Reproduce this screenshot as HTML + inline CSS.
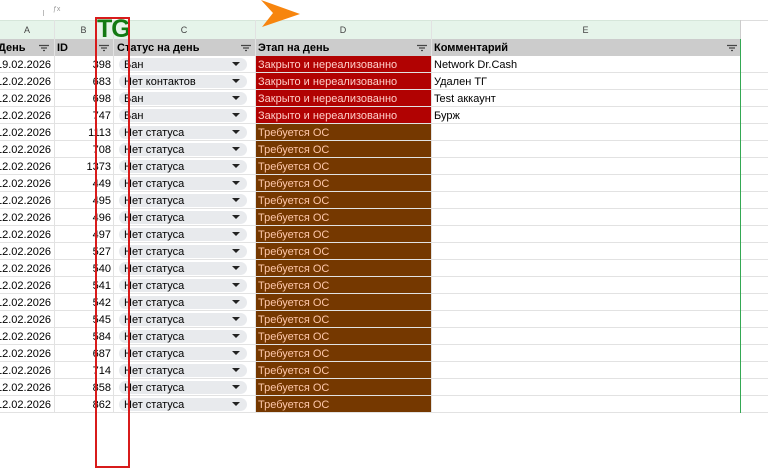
<!DOCTYPE html>
<html><head><meta charset="utf-8"><style>
*{margin:0;padding:0;box-sizing:border-box}
body{width:768px;height:469px;overflow:hidden;background:#fff;font-family:"Liberation Sans",Arial,sans-serif;font-size:11px;color:#000;position:relative}
.abs{position:absolute}
.c{position:absolute;height:17px;line-height:18px;white-space:nowrap;overflow:hidden}
.hl{position:absolute;left:0;width:768px;height:1px;background:#e2e2e2}
.vl{position:absolute;width:1px;background:#e2e2e2}
.pill{position:absolute;height:13px;top:2px;left:6px;width:128px;background:#e8eaed;border-radius:7px;padding-left:5px;line-height:15px}
.pill:after{content:"";position:absolute;right:7px;top:4px;border-left:4px solid transparent;border-right:4px solid transparent;border-top:4px solid #222}
</style></head><body>
<div class="abs" style="left:43px;top:10px;width:1px;height:6px;background:#bbb"></div>
<div class="abs" style="left:53px;top:6px;font-size:7px;color:#999">ƒx</div>
<div class="abs" style="left:0;top:20px;width:740px;height:19px;background:#e6f4ea;border-top:1px solid #d6e6da"></div>
<div class="abs" style="left:740px;top:20px;width:28px;height:19px;background:#fff;border-top:1px solid #ddd"></div>
<div class="abs" style="left:0;top:39px;width:740px;height:17px;background:#cccccc"></div>
<div class="abs" style="top:22px;left:0;width:54px;text-align:center;font-size:9px;color:#444;line-height:16px">A</div>
<div class="abs" style="top:22px;left:54px;width:59px;text-align:center;font-size:9px;color:#444;line-height:16px">B</div>
<div class="abs" style="top:22px;left:113px;width:142px;text-align:center;font-size:9px;color:#444;line-height:16px">C</div>
<div class="abs" style="top:22px;left:255px;width:176px;text-align:center;font-size:9px;color:#444;line-height:16px">D</div>
<div class="abs" style="top:22px;left:431px;width:309px;text-align:center;font-size:9px;color:#444;line-height:16px">E</div>
<div class="c" style="top:39px;left:-2px;font-weight:bold">День</div>
<div class="c" style="top:39px;left:57px;font-weight:bold">ID</div>
<div class="c" style="top:39px;left:117px;font-weight:bold">Статус на день</div>
<div class="c" style="top:39px;left:258px;font-weight:bold">Этап на день</div>
<div class="c" style="top:39px;left:434px;font-weight:bold">Комментарий</div>
<svg class="abs" style="left:0;top:39px" width="768" height="17">
<g stroke="#444" stroke-width="1.2">
<path d="M39 6.5h10M41 9h6M43 11.5h2"/><path d="M99 6.5h10M101 9h6M103 11.5h2"/><path d="M241 6.5h10M243 9h6M245 11.5h2"/><path d="M417 6.5h10M419 9h6M421 11.5h2"/><path d="M727 6.5h10M729 9h6M731 11.5h2"/>
</g></svg>
<div id="rows"></div>
<script>
var ids=[398,683,698,747,1113,708,1373,449,495,496,497,527,540,541,542,545,584,687,714,858,862];
var st=["Бан","Нет контактов","Бан","Бан"];
var cm=["Network Dr.Cash","Удален ТГ","Test аккаунт","Бурж"];
var h="";
for(var i=0;i<21;i++){
 var y=56+i*17;
 h+='<div class="hl" style="top:'+(y+16)+'px"></div>';
 h+='<div class="c" style="top:'+y+'px;left:-4px">'+(i==0?'19.02.2026':'12.02.2026')+'</div>';
 h+='<div class="c" style="top:'+y+'px;left:54px;width:57px;text-align:right">'+ids[i]+'</div>';
 h+='<div class="c" style="top:'+y+'px;left:113px;width:142px;overflow:visible"><div class="pill">'+(i<4?st[i]:'Нет статуса')+'</div></div>';
 var bg=i<4?'#b10202':'#753800', col=i<4?'#ffcfc9':'#ffc8aa';
 h+='<div class="c" style="top:'+y+'px;left:255px;width:176px;height:16px;background:'+bg+';color:'+col+';padding-left:3px">'+(i<4?'Закрыто и нереализованно':'Требуется ОС')+'</div>';
 if(i<4)h+='<div class="c" style="top:'+y+'px;left:434px">'+cm[i]+'</div>';
}
document.getElementById('rows').innerHTML=h;
</script>
<div class="vl" style="left:54px;top:20px;height:393px"></div>
<div class="vl" style="left:113px;top:20px;height:393px"></div>
<div class="vl" style="left:255px;top:20px;height:393px"></div>
<div class="vl" style="left:431px;top:20px;height:393px"></div>
<div class="abs" style="left:740px;top:39px;width:1px;height:374px;background:#34a853"></div>
<div class="abs" style="left:740px;top:20px;width:1px;height:19px;background:#ccc"></div>
<div class="abs" style="left:97px;top:15px;font-size:25px;color:#137a13;line-height:28px;letter-spacing:-1px;font-weight:bold">TG</div>
<div class="abs" style="left:95px;top:17px;width:35px;height:451px;border:2px solid #d81b1b"></div>
<svg class="abs" style="left:255px;top:0" width="50" height="30"><path d="M6 0 L45 14 L7 27 L18 13 Z" fill="#f7850e"/></svg>
</body></html>
